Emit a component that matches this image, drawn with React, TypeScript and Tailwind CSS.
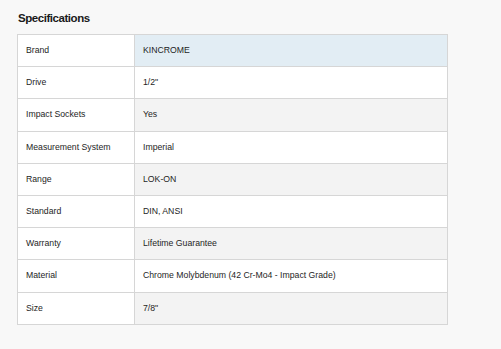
const specs: [string, string][] = [
  ["Brand", "KINCROME"],
  ["Drive", "1/2\""],
  ["Impact Sockets", "Yes"],
  ["Measurement System", "Imperial"],
  ["Range", "LOK-ON"],
  ["Standard", "DIN, ANSI"],
  ["Warranty", "Lifetime Guarantee"],
  ["Material", "Chrome Molybdenum (42 Cr-Mo4 - Impact Grade)"],
  ["Size", "7/8\""],
];

export default function App() {
  return (
    <div className="min-h-[349px] w-[501px] bg-[#f8f8f8] pl-[17px] pt-[10px] font-['Liberation_Sans',Arial,sans-serif] text-[#1e1e1e]">
      <h2 className="mb-[7px] pl-px text-[11.5px] font-bold leading-[17px] tracking-[-0.45px] text-[#1a1a1a]">
        Specifications
      </h2>
      <table className="w-[431px] border-collapse text-[8.7px]">
        <tbody>
          {specs.map(([label, value], i) => {
            const valueBg = i === 0 ? "bg-[#e2edf4]" : i % 2 === 0 ? "bg-[#f3f3f3]" : "bg-white";
            return (
              <tr key={label} className="h-[32.2px]">
                <td className="w-[117px] border border-[#d6d6d6] bg-white px-[8px] align-middle">{label}</td>
                <td className={`border border-[#d6d6d6] px-[8px] align-middle ${valueBg}`}>{value}</td>
              </tr>
            );
          })}
        </tbody>
      </table>
    </div>
  );
}
